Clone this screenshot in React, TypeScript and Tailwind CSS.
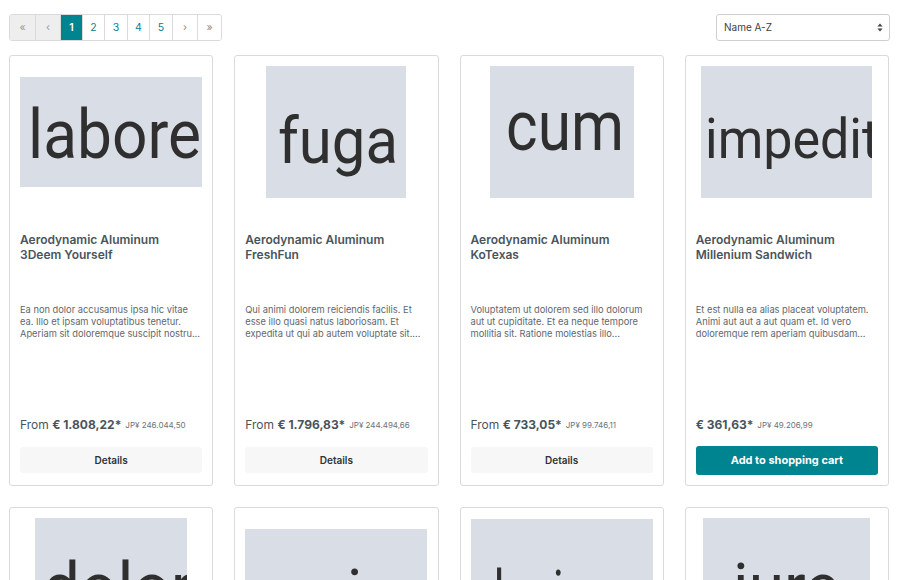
import React from "react";

type Thumb = {
  w: number;
  h: number;
  word: string;
  x: number;
  y: number;
  size: number;
  len?: number;
  anchor?: "start" | "middle";
};

type Product = {
  thumb: Thumb;
  name: [string, string];
  desc: [string, string, string];
  from: boolean;
  price: string;
  jpy: string;
  buy?: boolean;
};

const products: Product[] = [
  {
    thumb: { w: 182, h: 110, word: "labore", x: 8, y: 81, size: 68, len: 173 },
    name: ["Aerodynamic Aluminum", "3Deem Yourself"],
    desc: [
      "Ea non dolor accusamus ipsa hic vitae",
      "ea. Illo et ipsam voluptatibus tenetur.",
      "Aperiam sit doloremque suscipit nostru...",
    ],
    from: true,
    price: "€ 1.808,22*",
    jpy: "JP¥ 246.044,50",
  },
  {
    thumb: { w: 140, h: 132, word: "fuga", x: 12, y: 97, size: 64, len: 120 },
    name: ["Aerodynamic Aluminum", "FreshFun"],
    desc: [
      "Qui animi dolorem reiciendis facilis. Et",
      "esse illo quasi natus laboriosam. Et",
      "expedita ut qui ab autem voluptate sit....",
    ],
    from: true,
    price: "€ 1.796,83*",
    jpy: "JP¥ 244.494,66",
  },
  {
    thumb: { w: 144, h: 132, word: "cum", x: 16, y: 84, size: 70, len: 118 },
    name: ["Aerodynamic Aluminum", "KoTexas"],
    desc: [
      "Voluptatem ut dolorem sed illo dolorum",
      "aut ut cupiditate. Et ea neque tempore",
      "mollitia sit. Ratione molestias illo...",
    ],
    from: true,
    price: "€ 733,05*",
    jpy: "JP¥ 99.746,11",
  },
  {
    thumb: { w: 171, h: 132, word: "impedit", x: 4, y: 92, size: 56, len: 174 },
    name: ["Aerodynamic Aluminum", "Millenium Sandwich"],
    desc: [
      "Et est nulla ea alias placeat voluptatem.",
      "Animi aut aut a aut quam et. Id vero",
      "doloremque rem aperiam quibusdam...",
    ],
    from: false,
    price: "€ 361,63*",
    jpy: "JP¥ 49.206,99",
    buy: true,
  },
  {
    thumb: { w: 152, h: 132, word: "dolor", x: 8, y: 93, size: 68, len: 150 },
    name: ["Awesome Concrete", "Blue Bird"],
    desc: [
      "Sed aut quia dolores et ipsam dolorem.",
      "Quis nihil sit eos et. Doloribus nam",
      "laudantium vero consequatur ad...",
    ],
    from: true,
    price: "€ 512,40*",
    jpy: "JP¥ 69.721,37",
  },
  {
    thumb: { w: 182, h: 110, word: "quia", x: 91, y: 86, size: 64, anchor: "middle" },
    name: ["Awesome Concrete", "Cloud Nine"],
    desc: [
      "Eum aut voluptas dolorem quia ut sit.",
      "Ut nemo et autem. Consequuntur sit",
      "voluptatem rerum quaerat...",
    ],
    from: true,
    price: "€ 845,19*",
    jpy: "JP¥ 115.002,77",
  },
  {
    thumb: { w: 182, h: 130, word: "ducimus", x: 8, y: 93, size: 60, len: 172 },
    name: ["Awesome Concrete", "Harbor Lights"],
    desc: [
      "Ducimus quo omnis natus aut in est.",
      "Et velit aperiam est. Eius non qui",
      "numquam similique beatae...",
    ],
    from: true,
    price: "€ 299,90*",
    jpy: "JP¥ 40.806,43",
  },
  {
    thumb: { w: 167, h: 132, word: "iure", x: 83, y: 91, size: 64, anchor: "middle" },
    name: ["Awesome Concrete", "Sunny Side"],
    desc: [
      "Iure dolorem et rerum qui assumenda.",
      "Quam aut in sit aliquid. Ipsa qui",
      "ipsum voluptatem officiis...",
    ],
    from: false,
    price: "€ 129,00*",
    jpy: "JP¥ 17.552,63",
    buy: true,
  },
];

function Thumbnail({ t }: { t: Thumb }) {
  return (
    <svg width={t.w} height={t.h} viewBox={`0 0 ${t.w} ${t.h}`} className="block">
      <rect width={t.w} height={t.h} fill="#d9dde5" />
      <text
        x={t.x}
        y={t.y}
        fontSize={t.size}
        fill="#2f2f2f"
        textAnchor={t.anchor ?? "start"}
        fontFamily="Roboto, 'Noto Sans', sans-serif"
        {...(t.len ? { textLength: t.len, lengthAdjust: "spacingAndGlyphs" } : {})}
      >
        {t.word}
      </text>
    </svg>
  );
}

function ProductCard({ p }: { p: Product }) {
  return (
    <div className="flex h-[431px] flex-col rounded-[3px] border border-[#dadada] bg-white px-[10px] pt-[10px]">
      <div className="flex h-[132px] items-center justify-center overflow-hidden">
        <Thumbnail t={p.thumb} />
      </div>
      <div className="mt-[34px] text-[12px] font-semibold leading-[15px] text-[#4a545b]">
        <div className="whitespace-nowrap">{p.name[0]}</div>
        <div className="whitespace-nowrap">{p.name[1]}</div>
      </div>
      <div className="mt-[42px] text-[9.3px] leading-[12px] text-[#5f676e]">
        {p.desc.map((line) => (
          <div key={line} className="whitespace-nowrap">
            {line}
          </div>
        ))}
      </div>
      <div className="mt-[76px] flex h-[18px] items-center gap-[4px] whitespace-nowrap text-[#4a545b]">
        <span className="text-[12px]">
          {p.from && <span>From </span>}
          <span className="font-bold">{p.price}</span>
        </span>
        <span className="text-[8px] text-[#6b737a]">{p.jpy}</span>
      </div>
      {p.buy ? (
        <button className="mt-[12px] flex h-[29px] w-full items-center justify-center rounded-[3px] bg-[#008490] text-[11px] font-bold text-white">
          Add to shopping cart
        </button>
      ) : (
        <button className="mt-[13px] flex h-[26px] w-full items-center justify-center rounded-[3px] bg-[#f7f7f7] text-[10px] font-semibold text-[#2f3337]">
          Details
        </button>
      )}
    </div>
  );
}

const pages = [
  { label: "«", w: "w-[25px]", kind: "nav" },
  { label: "‹", w: "w-[25px]", kind: "nav" },
  { label: "1", w: "w-[22px]", kind: "active" },
  { label: "2", w: "w-[22px]", kind: "num" },
  { label: "3", w: "w-[23px]", kind: "num" },
  { label: "4", w: "w-[22px]", kind: "num" },
  { label: "5", w: "w-[23px]", kind: "num" },
  { label: "›", w: "w-[25px]", kind: "next" },
  { label: "»", w: "w-[24px]", kind: "next" },
];

function Pagination() {
  return (
    <div className="flex h-[27px] overflow-hidden rounded-[3px] border border-[#dadada]">
      {pages.map((pg, i) => (
        <div
          key={pg.label}
          className={[
            "flex items-center justify-center text-[10.5px]",
            pg.w,
            i > 0 ? "border-l border-[#dadada]" : "",
            pg.kind === "nav" ? "bg-[#eeeeee] text-[#9a9a9a]" : "",
            pg.kind === "active" ? "bg-[#008490] font-semibold text-white" : "",
            pg.kind === "num" ? "bg-white text-[#008490]" : "",
            pg.kind === "next" ? "bg-white text-[#8a8a8a]" : "",
          ].join(" ")}
        >
          {pg.label}
        </div>
      ))}
    </div>
  );
}

function SortSelect() {
  return (
    <div className="flex h-[27px] w-[174px] items-center justify-between rounded-[3px] border border-[#cfcfcf] bg-white pl-[7px] pr-[6px] text-[10px] text-[#3a3f44]">
      <span>Name A-Z</span>
      <svg width="6" height="9" viewBox="0 0 6 9" className="block">
        <path d="M3 0.5 L5.6 3.6 H0.4 Z" fill="#444" />
        <path d="M3 8.5 L5.6 5.4 H0.4 Z" fill="#444" />
      </svg>
    </div>
  );
}

export default function App() {
  return (
    <div
      className="min-h-[580px] w-[900px] bg-white pl-[9px] pt-[14px]"
      style={{ fontFamily: "Inter, 'Noto Sans', sans-serif" }}
    >
      <div className="flex w-[881px] items-start justify-between">
        <Pagination />
        <SortSelect />
      </div>
      <div className="mt-[14px] grid w-[880px] grid-cols-4 gap-[21px]">
        {products.map((p, i) => (
          <ProductCard key={i} p={p} />
        ))}
      </div>
    </div>
  );
}
